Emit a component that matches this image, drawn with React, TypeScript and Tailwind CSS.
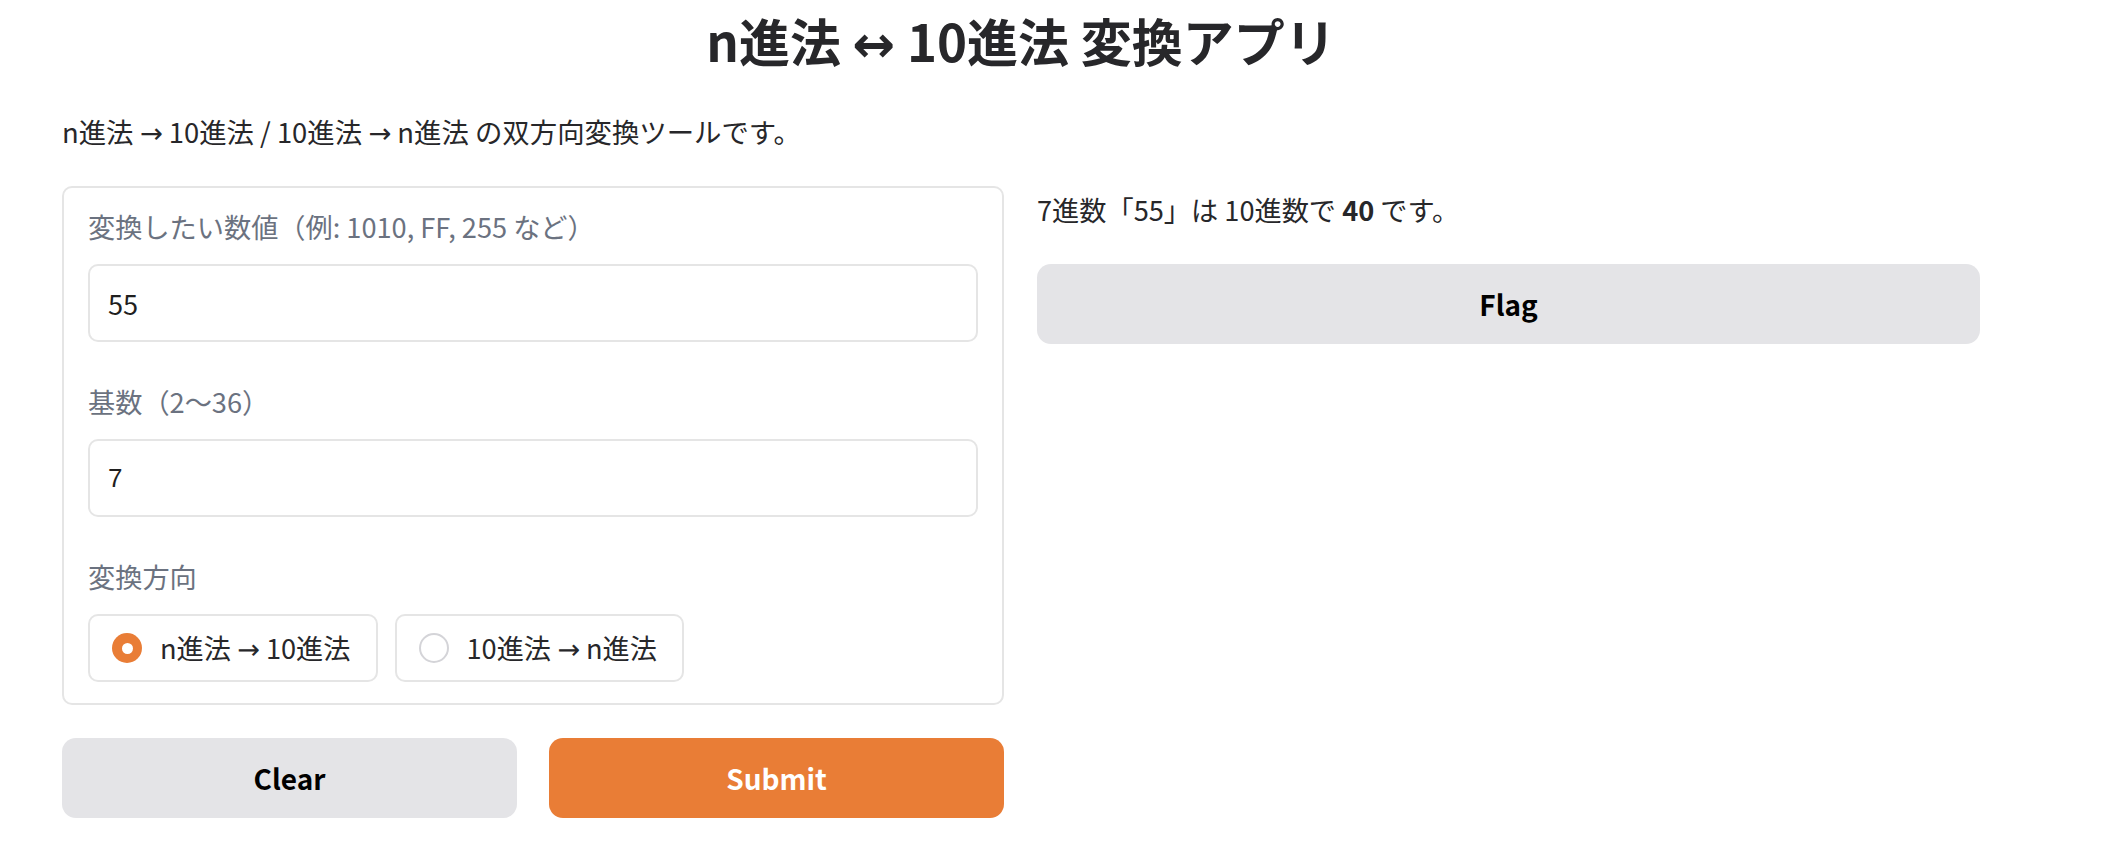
import { useState } from "react";

const font = "font-['Noto_Sans_CJK_JP',sans-serif]";

// 矢印だけ細めのフォントで描く
function Arrow({ ch = "→" }: { ch?: string }) {
  return <span className="font-['Noto_Sans','DejaVu_Sans',sans-serif]">{ch}</span>;
}

function Radio({ checked, children, onClick }: { checked: boolean; children: React.ReactNode; onClick: () => void }) {
  return (
    <button
      type="button"
      onClick={onClick}
      className="flex h-[68px] items-center gap-[18px] rounded-[10px] border-2 border-[#e5e5e5] bg-white pl-[22px] pr-[25px] text-[27.2px] text-[#27272a]"
    >
      {checked ? (
        <span className="flex h-[30px] w-[30px] items-center justify-center rounded-full bg-[#e97d36]">
          <span className="h-[11px] w-[11px] rounded-full bg-white" />
        </span>
      ) : (
        <span className="h-[30px] w-[30px] rounded-full border-2 border-[#d4d4d8] bg-white" />
      )}
      <span className="leading-none">{children}</span>
    </button>
  );
}

export default function App() {
  const [value, setValue] = useState("55");
  const [base, setBase] = useState("7");
  const [dir, setDir] = useState<"toDec" | "fromDec">("toDec");

  return (
    <div className={`${font} min-h-[862px] w-[2104px] bg-white text-[#27272a]`}>
      <div className="w-[1918px] pl-[62px] box-content">
        <h1 className="pt-[9px] text-center text-[51px] font-bold leading-[62px]">
          n進法 <Arrow ch="↔" /> 10進法 変換アプリ
        </h1>
        <p className="mt-[38px] text-[27.4px] leading-[40px]">
          n進法 <Arrow /> 10進法 / 10進法 <Arrow /> n進法 の双方向変換ツールです。
        </p>

        <div className="mt-[33px] flex gap-[33px]">
          {/* 入力 */}
          <div className="flex w-[942px] flex-col gap-[33px]">
            <div className="flex flex-col gap-[39px] rounded-[10px] border-2 border-[#e5e5e5] px-[24px] pb-[21px] pt-[18px]">
              <div className="flex flex-col gap-[18px]">
                <label className="text-[27.2px] leading-[40px] text-[#6b7280]">変換したい数値（例: 1010, FF, 255 など）</label>
                <input
                  value={value}
                  onChange={(e) => setValue(e.target.value)}
                  className="h-[78px] rounded-[10px] border-2 border-[#e5e5e5] px-[18px] text-[27.2px] text-[#1f1f1f] outline-none"
                />
              </div>
              <div className="flex flex-col gap-[18px]">
                <label className="text-[27.2px] leading-[40px] text-[#6b7280]">基数（2〜36）</label>
                <input
                  value={base}
                  onChange={(e) => setBase(e.target.value)}
                  className="h-[78px] rounded-[10px] border-2 border-[#e5e5e5] px-[18px] font-['Liberation_Sans',sans-serif] text-[26px] text-[#1f1f1f] outline-none"
                />
              </div>
              <div className="flex flex-col gap-[18px]">
                <label className="text-[27.2px] leading-[40px] text-[#6b7280]">変換方向</label>
                <div className="flex gap-[17px]">
                  <Radio checked={dir === "toDec"} onClick={() => setDir("toDec")}>
                    n進法 <Arrow /> 10進法
                  </Radio>
                  <Radio checked={dir === "fromDec"} onClick={() => setDir("fromDec")}>
                    10進法 <Arrow /> n進法
                  </Radio>
                </div>
              </div>
            </div>

            <div className="flex gap-[32px]">
              <button className="h-[80px] flex-1 rounded-[14px] bg-[#e4e4e7] text-[28px] font-semibold text-black">Clear</button>
              <button className="h-[80px] flex-1 rounded-[14px] bg-[#e97d36] text-[28px] font-semibold text-white">Submit</button>
            </div>
          </div>

          {/* 結果 */}
          <div className="flex flex-1 flex-col gap-[35px] pt-[3px]">
            <p className="text-[27.2px] leading-[40px]">
              7進数「55」は 10進数で <strong className="font-bold">40</strong> です。
            </p>
            <button className="h-[80px] w-full rounded-[14px] bg-[#e4e4e7] text-[28px] font-semibold text-black">Flag</button>
          </div>
        </div>
      </div>
    </div>
  );
}
